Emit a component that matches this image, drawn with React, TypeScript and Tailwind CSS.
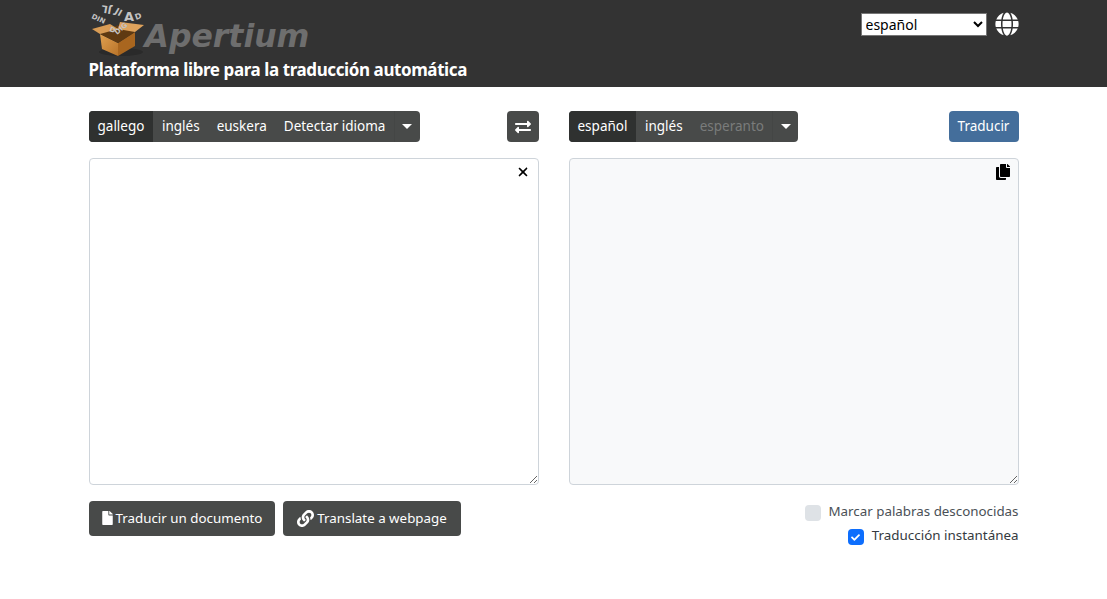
import { FaExchangeAlt, FaCopy, FaFile, FaLink, FaGlobe, FaCheck } from 'react-icons/fa';
import { FaXmark } from 'react-icons/fa6';

const uiFont = "font-['Noto_Sans','Open_Sans',sans-serif]";

function Caret() {
  return <span className="h-0 w-0 border-x-[5px] border-t-[5px] border-x-transparent border-t-white" />;
}

function LangGroup({ items, active, dim }: { items: string[]; active: string; dim?: string }) {
  return (
    <div className="flex h-[31px] items-stretch overflow-hidden rounded-[4px] bg-[#484a49] text-[13.5px] text-white">
      {items.map((item) => (
        <span
          key={item}
          className={
            item === active
              ? 'flex items-center bg-[#2f3130] px-[9px] pb-[1px]'
              : item === dim
                ? 'flex items-center px-[8.5px] pb-[1px] text-[#7a7c7b]'
                : 'flex items-center px-[8.5px] pb-[1px]'
          }
        >
          {item}
        </span>
      ))}
      <span className="flex w-[26px] items-center justify-center border-l border-[#444645]">
        <Caret />
      </span>
    </div>
  );
}

function BoxLogo() {
  return (
    <svg width="60" height="56" viewBox="0 0 60 56" className="ml-[-4px] shrink-0">
      <defs>
        <linearGradient id="front" x1="0" y1="0" x2="1" y2="1">
          <stop offset="0" stopColor="#e0a050" />
          <stop offset="1" stopColor="#b8742a" />
        </linearGradient>
      </defs>
      <ellipse cx="36" cy="51" rx="22" ry="4" fill="#2a2a2a" />
      <polygon points="15,33 33,42 33,55 17,48" fill="url(#front)" />
      <polygon points="33,42 50,31 50,45 33,55" fill="#a9661f" />
      <polygon points="15,33 33,42 50,31 33,24" fill="#5f3a12" />
      <polygon points="15,33 7,28 25,23 33,28" fill="#d99c55" />
      <polygon points="50,31 59,24 35,21 33,28" fill="#dfa35c" />
      <g fill="#c4c4c4" fontFamily="'DejaVu Sans',sans-serif" fontSize="7" fontWeight="700">
        <text x="6" y="17" transform="rotate(25 6 17)">DIN</text>
        <text x="24" y="30" transform="rotate(20 24 30)">D</text>
        <text x="32" y="34" transform="rotate(-40 32 34)">DIG</text>
        <text x="27" y="6" transform="rotate(190 27 6)" fontSize="10">JL</text>
        <text x="39" y="20" fontSize="13">A</text>
        <text x="51" y="19" transform="rotate(-20 51 19)" fontSize="8">D</text>
        <text x="29" y="12" transform="rotate(30 29 12)" fontSize="9">JI</text>
      </g>
    </svg>
  );
}

export default function App() {
  return (
    <div className={`min-h-[599px] bg-white ${uiFont}`}>
      <header className="h-[87px] bg-[#333333]">
        <div className="mx-auto flex w-[930px] justify-between">
          <div>
            <div className="flex h-[57px] items-end">
              <BoxLogo />
              <span className="mb-[-1px] font-['DejaVu_Sans',sans-serif] text-[31.5px] leading-[44px] font-bold text-[#6e6e6e] italic">
                Apertium
              </span>
            </div>
            <h1 className="mt-[1px] text-[17px] leading-[24px] font-bold tracking-[-0.41px] text-white">
              Plataforma libre para la traducción automática
            </h1>
          </div>
          <div className="flex items-start gap-[8px] pt-[12px]">
            <select defaultValue="español" className="mt-[1px] h-[23px] w-[126px] appearance-auto border border-[#767676] bg-white text-[14px] text-black">
              <option>español</option>
            </select>
            <FaGlobe className="text-[24px] text-white" />
          </div>
        </div>
      </header>

      <main className="mx-auto w-[930px] pt-[24px]">
        <div className="grid grid-cols-2 gap-x-[30px]">
          <div className="flex justify-between">
            <LangGroup items={['gallego', 'inglés', 'euskera', 'Detectar idioma']} active="gallego" />
            <button className="flex h-[31px] w-[32px] items-center justify-center rounded-[4px] bg-[#484a49] text-[16px] text-white">
              <FaExchangeAlt />
            </button>
          </div>
          <div className="flex justify-between">
            <LangGroup items={['español', 'inglés', 'esperanto']} active="español" dim="esperanto" />
            <button className="h-[31px] w-[70px] rounded-[4px] bg-[#446e9b] pb-[1px] text-[13.5px] text-white">Traducir</button>
          </div>

          <div className="relative mt-[16px]">
            <textarea className="block h-[327px] w-full rounded-[4px] border border-[#ced4da] bg-white" />
            <FaXmark className="absolute top-[7px] right-[9px] text-[14px] text-black" />
          </div>
          <div className="relative mt-[16px]">
            <textarea readOnly className="block h-[327px] w-full rounded-[4px] border border-[#ced4da] bg-[#f8f9fa]" />
            <FaCopy className="absolute top-[6px] right-[8px] text-[16px] text-black" />
          </div>

          <div className="mt-[16px] flex items-start gap-[8px]">
            <button className="flex h-[35px] items-center gap-[3px] rounded-[4px] bg-[#484a49] px-[13px] pb-[1px] text-[13.35px] text-white">
              <FaFile className="w-[11px] text-[14px]" />
              Traducir un documento
            </button>
            <button className="flex h-[35px] items-center gap-[3px] rounded-[4px] bg-[#484a49] px-[14px] pb-[1px] text-[13.35px] text-white">
              <FaLink className="text-[17px]" />
              Translate a webpage
            </button>
          </div>
          <div className="mt-[16px] flex flex-col items-end text-[#343a40]">
            <label className="flex h-[19px] items-center gap-[8px] text-[13.35px]">
              <span className="mt-[4px] h-[16px] w-[16px] rounded-[4px] bg-[#dee2e6]" />
              <span className="text-[#4a5056]">Marcar palabras desconocidas</span>
            </label>
            <label className="mt-[6px] flex h-[19px] items-center gap-[8px] text-[13.4px]">
              <span className="mt-[3px] flex h-[16px] w-[16px] items-center justify-center rounded-[4px] bg-[#0d6efd]">
                <FaCheck className="text-[9px] text-white" />
              </span>
              <span>Traducción instantánea</span>
            </label>
          </div>
        </div>
      </main>
    </div>
  );
}
